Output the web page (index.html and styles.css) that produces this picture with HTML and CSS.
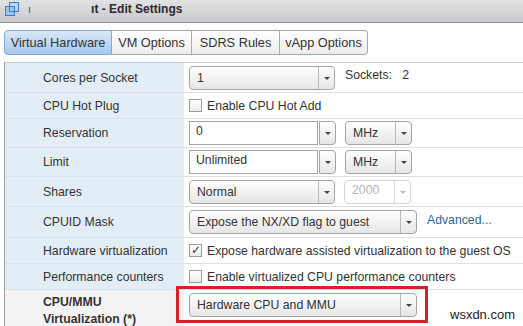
FILE: index.html
```html
<!DOCTYPE html>
<html lang="en">
<head>
    <meta charset="UTF-8">
    <title>Edit Settings</title>
    <link rel="stylesheet" href="styles.css">
</head>
<body>
    <div class="titlebar">
        <svg class="app-icon" width="16" height="16" viewBox="0 0 16 16">
            <rect x="5.5" y="1.5" width="9" height="9" fill="#b9d6f2" stroke="#3d7cc0"/>
            <rect x="1.5" y="5.5" width="9" height="9" fill="#9cc6ee" stroke="#3d7cc0"/>
            <path d="M5.5 10.5h5M5.5 5.5v5" stroke="#3d7cc0" fill="none"/>
        </svg>
        <span class="title-mark">ı</span>
        <span class="title">ıt - Edit Settings</span>
    </div>

    <div class="tabs">
        <div class="tab active tab-vh">Virtual Hardware</div>
        <div class="tab tab-vm">VM Options</div>
        <div class="tab tab-sdrs">SDRS Rules</div>
        <div class="tab tab-vapp">vApp Options</div>
    </div>

    <div class="panel">
        <div class="row r-30">
            <div class="label">Cores per Socket</div>
            <div class="value">
                <div class="select w-wide"><span class="sel-text">1</span><span class="sel-arrow"></span></div>
                <span class="sockets">Sockets:&nbsp;&nbsp; 2</span>
            </div>
        </div>
        <div class="row r-26">
            <div class="label">CPU Hot Plug</div>
            <div class="value">
                <span class="check"></span><span class="check-text">Enable CPU Hot Add</span>
            </div>
        </div>
        <div class="row r-29">
            <div class="label">Reservation</div>
            <div class="value">
                <div class="combo"><span class="combo-input">0</span><span class="combo-btn"><span class="sel-arrow"></span></span></div>
                <div class="select w-unit"><span class="sel-text">MHz</span><span class="sel-arrow"></span></div>
            </div>
        </div>
        <div class="row r-29">
            <div class="label">Limit</div>
            <div class="value">
                <div class="combo"><span class="combo-input">Unlimited</span><span class="combo-btn"><span class="sel-arrow"></span></span></div>
                <div class="select w-unit"><span class="sel-text">MHz</span><span class="sel-arrow"></span></div>
            </div>
        </div>
        <div class="row r-30">
            <div class="label">Shares</div>
            <div class="value">
                <div class="select w-wide"><span class="sel-text">Normal</span><span class="sel-arrow"></span></div>
                <div class="select w-unit disabled"><span class="sel-text top">2000</span><span class="sel-arrow"></span></div>
            </div>
        </div>
        <div class="row r-31">
            <div class="label">CPUID Mask</div>
            <div class="value">
                <div class="select w-long"><span class="sel-text">Expose the NX/XD flag to guest</span><span class="sel-arrow"></span></div>
                <span class="link">Advanced...</span>
            </div>
        </div>
        <div class="row r-26">
            <div class="label">Hardware virtualization</div>
            <div class="value">
                <span class="check checked">&#10003;</span><span class="check-text">Expose hardware assisted virtualization to the guest OS</span>
            </div>
        </div>
        <div class="row r-26">
            <div class="label">Performance counters</div>
            <div class="value">
                <span class="check"></span><span class="check-text">Enable virtualized CPU performance counters</span>
            </div>
        </div>
        <div class="row last">
            <div class="label bold">CPU/MMU<br>Virtualization (*)</div>
            <div class="value top-value">
                <div class="select w-long"><span class="sel-text">Hardware CPU and MMU</span><span class="sel-arrow"></span></div>
                <div class="highlight"></div>
                <span class="watermark">wsxdn.com</span>
            </div>
        </div>
    </div>
</body>
</html>
```

FILE: styles.css
```css
body {
    margin: 0;
    width: 523px;
    height: 326px;
    overflow: hidden;
    background: #fff;
    font-family: "Liberation Sans", Arial, sans-serif;
    font-size: 12.25px;
    color: #333;
}
.titlebar {
    height: 22px;
    display: flex;
    align-items: center;
    background: linear-gradient(#e2e3e5, #c8c9cc);
    border-bottom: 1px solid #8f9093;
}
.app-icon {
    margin-left: 4px;
    margin-top: -5px;
}
.title-mark {
    margin-left: 8px;
    margin-top: -5px;
    font-size: 11px;
    color: #555;
}
.title {
    margin-left: 60px;
    margin-top: -5px;
    font-weight: bold;
    font-size: 12px;
    color: #2a2a2a;
}
.tabs {
    display: flex;
    margin: 7px 0 0 4px;
}
.tab {
    box-sizing: border-box;
    height: 25px;
    line-height: 23px;
    text-align: center;
    font-size: 12.75px;
    border: 1px solid #a9a9a9;
    border-left: none;
    background: linear-gradient(#ffffff, #ececec);
}
.tab.active {
    border: 1px solid #86a9cf;
    border-radius: 4px 0 0 4px;
    background: linear-gradient(#d9e8f8, #a5c9ef);
}
.tab-vh { width: 108px; }
.tab-vm { width: 80px; }
.tab-sdrs { width: 88px; }
.tab-vapp {
    width: 88px;
    border-radius: 0 4px 4px 0;
}
.panel {
    margin: 7px 0 0 4px;
    border-left: 1px solid #9d9d9d;
    border-top: 1px solid #c9cdd1;
}
.row {
    box-sizing: border-box;
    display: grid;
    grid-template-columns: 179px 1fr;
    border-bottom: 1px solid #dcdfe3;
}
.r-26 { height: 26px; }
.r-29 { height: 29px; }
.r-30 { height: 30px; }
.r-31 { height: 31px; }
.row.last {
    height: 40px;
    border-bottom: none;
}
.label {
    display: flex;
    align-items: center;
    padding-left: 38px;
    background: #e3edf6;
}
.label.bold {
    display: block;
    padding-top: 4px;
    line-height: 17px;
    font-weight: bold;
    background: #f3f3f3;
}
.value {
    position: relative;
    display: flex;
    align-items: center;
    padding-left: 5px;
}
.value.top-value {
    align-items: flex-start;
    padding-top: 3px;
}
.select {
    box-sizing: border-box;
    display: flex;
    height: 24px;
    border: 1px solid #a4a4a4;
    border-radius: 4px;
    background: linear-gradient(#fefefe, #e6e6e6);
}
.w-wide { width: 146px; }
.w-unit {
    width: 67px;
    margin-left: 9px;
}
.w-long { width: 228px; }
.sel-text {
    flex: 1;
    padding-left: 7px;
    line-height: 22px;
    white-space: nowrap;
    overflow: hidden;
}
.sel-text.top { line-height: 19px; }
.sel-arrow {
    position: relative;
    width: 15px;
    border-left: 1px solid #b8b8b8;
}
.sel-arrow::after {
    content: "";
    position: absolute;
    left: 5px;
    top: 10px;
    border-left: 3px solid transparent;
    border-right: 3px solid transparent;
    border-top: 3px solid #444;
}
.disabled {
    border-color: #d6d6d6;
    background: #fff;
    color: #b4b4b4;
}
.disabled .sel-arrow { border-left-color: #dedede; }
.disabled .sel-arrow::after { border-top-color: #bbb; }
.combo {
    display: flex;
    height: 24px;
}
.combo-input {
    box-sizing: border-box;
    width: 129px;
    height: 24px;
    padding: 2px 0 0 6px;
    border: 1px solid #a4a4a4;
    background: #fff;
    line-height: 15px;
}
.combo-btn {
    box-sizing: border-box;
    display: flex;
    width: 17px;
    height: 24px;
    margin-left: 1px;
    border: 1px solid #a4a4a4;
    border-radius: 0 4px 4px 0;
    background: linear-gradient(#fefefe, #e6e6e6);
}
.combo-btn .sel-arrow { border-left: none; }
.sockets {
    margin: -6px 0 0 10px;
}
.link {
    margin: -4px 0 0 10px;
    color: #2d659c;
}
.check {
    box-sizing: border-box;
    width: 13px;
    height: 13px;
    border: 1px solid #9c9c9c;
    background: linear-gradient(#ffffff, #ebebeb);
    font-size: 12px;
    line-height: 11px;
    text-align: center;
    color: #444;
}
.check-text {
    margin-left: 5px;
}
.highlight {
    position: absolute;
    left: -8px;
    top: -4px;
    width: 246px;
    height: 31px;
    border: 3px solid #d4222b;
}
.watermark {
    position: absolute;
    left: 266px;
    top: 17px;
    font-size: 13px;
    color: #222;
}
```
